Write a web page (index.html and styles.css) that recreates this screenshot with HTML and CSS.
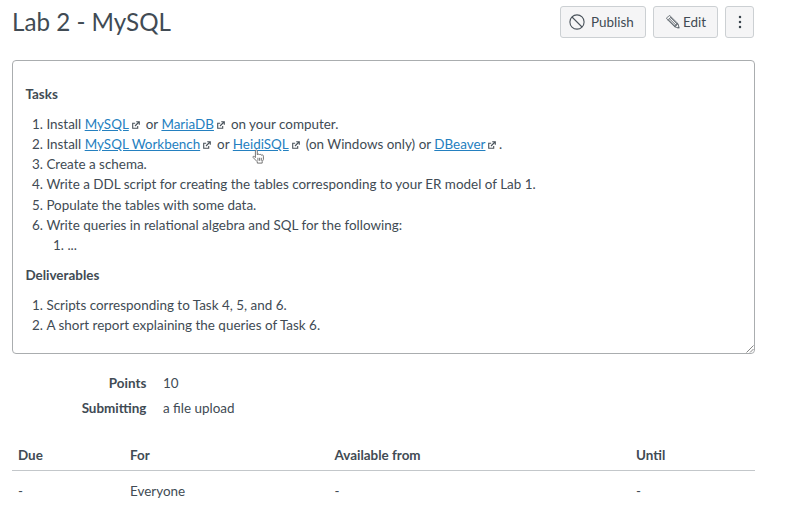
FILE: index.html
```
<!DOCTYPE html>
<html lang="en">
<head>
<meta charset="utf-8">
<title>Lab 2 - MySQL</title>
<link rel="stylesheet" href="styles.css">
</head>
<body>
<svg class="defs" aria-hidden="true">
  <symbol id="external" viewBox="0 0 8 8">
    <path d="M3.2 2.2H.7v5h5V4.9M4.2.7h3.1v3M7 1 3 5" fill="none" stroke="currentColor" stroke-width="1.1"/>
  </symbol>
</svg>
<main class="page">
  <header class="header">
    <h1 class="title">Lab 2 - MySQL</h1>
    <div class="actions">
      <button class="btn btn-publish">
        <svg class="icon-publish" viewBox="0 0 16 16"><circle cx="8" cy="8" r="7.1"/><path d="m3 3 10 10"/></svg>
        <span>Publish</span>
      </button>
      <button class="btn btn-edit">
        <svg class="icon-edit" viewBox="0 0 14 14"><path d="M.8 2.9 2.9.8q.6-.4 1.2.1l7.9 7.8 1.2 4.4-4.4-1.2L.9 4.1Q.4 3.5.8 2.9ZM2 5.2 5.2 2M3.3 3.6l7 7M4.7 2.6l7 7M2.8 5.1l6.8 6.8M8.8 11.9l.5-1.7 1.1.2.1-1.2 1.5-.4M11.7 13l1.3-1.2"/></svg>
        <span>Edit</span>
      </button>
      <button class="btn btn-more" aria-label="More">
        <svg class="icon-more" viewBox="0 0 4 14"><circle cx="2" cy="2" r="1.25"/><circle cx="2" cy="7" r="1.25"/><circle cx="2" cy="12" r="1.25"/></svg>
      </button>
    </div>
  </header>

  <section class="description">
    <p><strong>Tasks</strong></p>
    <ol>
      <li>Install <a href="#">MySQL</a><svg class="ext"><use href="#external"/></svg> or <a href="#">MariaDB</a><svg class="ext"><use href="#external"/></svg> on your computer.</li>
      <li>Install <a href="#">MySQL Workbench</a><svg class="ext"><use href="#external"/></svg> or <span class="hovered"><a href="#">HeidiSQL</a><svg class="cursor" viewBox="0 0 14 15"><path d="M3.4 8.6V1.8q0-1 .9-1t1 1v4q.2-.8 1.1-.7.8 0 1 .9.3-.7 1.1-.6.8.1.9.9.3-.5 1-.4 1 .2 1 1.3v3.2l-1.2 2.2v1.5H5.3v-1.3L1.2 8.6q-.5-.9.2-1.3.8-.4 2 1.3ZM5.9 8.8v3M7.6 8.8v3M9.3 8.8v3"/></svg></span><svg class="ext"><use href="#external"/></svg> (on Windows only) or <a href="#">DBeaver</a><svg class="ext"><use href="#external"/></svg>.</li>
      <li>Create a schema.</li>
      <li>Write a DDL script for creating the tables corresponding to your ER model of Lab 1.</li>
      <li>Populate the tables with some data.</li>
      <li>Write queries in relational algebra and SQL for the following:
        <ol><li>...</li></ol>
      </li>
    </ol>
    <p><strong>Deliverables</strong></p>
    <ol>
      <li>Scripts corresponding to Task 4, 5, and 6.</li>
      <li>A short report explaining the queries of Task 6.</li>
    </ol>
    <svg class="grip" viewBox="0 0 8 8"><path d="M.5 7.5l7-7M4 7.5 7.5 4"/></svg>
  </section>

  <dl class="details">
    <dt>Points</dt><dd>10</dd>
    <dt>Submitting</dt><dd>a file upload</dd>
  </dl>

  <table class="dates">
    <thead><tr><th class="due">Due</th><th class="for">For</th><th class="from">Available from</th><th>Until</th></tr></thead>
    <tbody><tr><td>-</td><td>Everyone</td><td>-</td><td>-</td></tr></tbody>
  </table>
</main>
</body>
</html>
```
FILE: styles.css
```
* { box-sizing: border-box; }
body {
  margin: 0;
  background: #fff;
  color: #414b54;
  font: 13.44px/20.16px Lato, sans-serif;
  overflow: hidden;
}
.defs { display: none; }
.page { width: 755px; padding-left: 12px; }

.header {
  display: flex;
  justify-content: space-between;
  height: 60px;
  padding-top: 6px;
}
.title { margin: 0; font-size: 24.2px; line-height: 32px; font-weight: 400; }
.actions { display: flex; gap: 7px; margin-right: 1px; }
.btn {
  display: flex;
  align-items: center;
  height: 32px;
  padding: 0;
  border: 1px solid #ccd0d3;
  border-radius: 3px;
  background: #f5f5f6;
  color: inherit;
  font: inherit;
}
.btn svg { fill: none; stroke: #4a535b; }
.btn-publish { width: 86px; padding-left: 7.5px; gap: 6.5px; }
.btn-edit { width: 65px; padding-left: 12px; gap: 3px; }
.btn-more { width: 29px; justify-content: center; }
.icon-publish { width: 16px; height: 16px; margin-top: -1px; stroke-width: 1.1; }
.icon-edit { width: 14px; height: 14px; stroke-width: .8; }
.btn .icon-more { width: 4px; height: 14px; fill: #3b454e; stroke: none; }

.description {
  position: relative;
  height: 294px;
  padding: 22.8px 12.4px 0;
  border: 1px solid #aaadaf;
  border-radius: 4px;
}
.description p { margin: 0 0 10px; }
.description ol { margin: 0 0 10px; padding-left: 21px; }
.description ol ol { margin: 0; }
a { color: #2480c0; text-decoration: underline; }
.ext { width: 8px; height: 8px; margin: 0 2.5px 0 3px; color: #49525a; }
.hovered { position: relative; }
.cursor { position: absolute; left: 19px; top: 13px; width: 14px; height: 15px; fill: #fff; stroke: #666; stroke-width: .9; }
.grip { position: absolute; right: 0; bottom: 0; width: 8px; height: 8px; fill: none; stroke: #777; stroke-width: .9; }

.details {
  display: grid;
  grid-template-columns: 134.4px 1fr;
  column-gap: 16.6px;
  row-gap: 4.5px;
  margin: 19.2px 0 0;
}
.details dt { font-weight: 700; text-align: right; }
.details dd { margin: 0; }

.dates { width: 743px; margin-top: 22px; border-collapse: collapse; table-layout: fixed; }
.dates th, .dates td { padding: 5px 6px; text-align: left; }
.dates th { border-bottom: 1px solid #c3c7ca; }
.dates td { padding-top: 10px; }
.due { width: 112px; }
.for { width: 204.5px; }
.from { width: 301.5px; }
```
